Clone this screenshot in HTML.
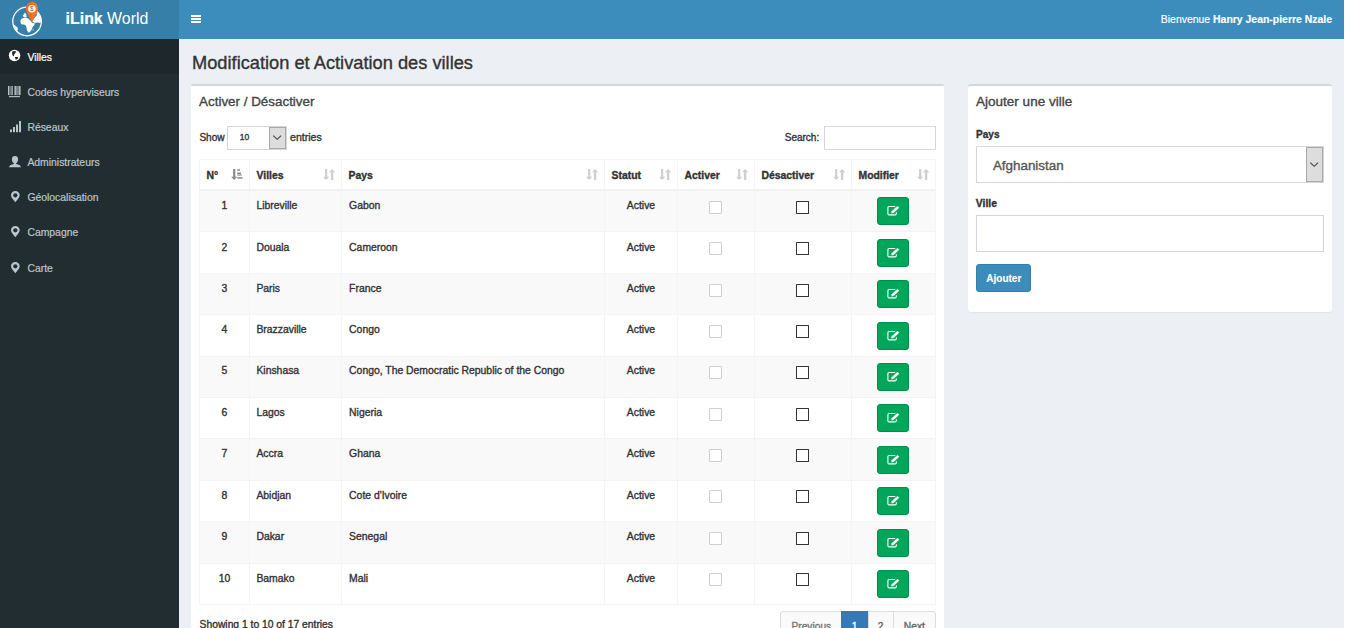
<!DOCTYPE html>
<html><head><meta charset="utf-8"><title>iLink World</title>
<style>
html,body{margin:0;padding:0;}
body{width:1345px;height:628px;overflow:hidden;position:relative;background:#fff;font-family:"Liberation Sans",sans-serif;}
.a{position:absolute;box-sizing:border-box;}
.t{position:absolute;white-space:nowrap;line-height:1;-webkit-text-stroke:0.35px currentColor;}
svg{position:absolute;overflow:visible;}
</style></head><body>
<div class="a" style="left:0px;top:0px;width:1344px;height:628px;background:#ecf0f5"></div>
<div class="a" style="left:0px;top:0px;width:179px;height:39px;background:#367fa9"></div>
<div class="a" style="left:179px;top:0px;width:1165px;height:39px;background:#3c8dbc"></div>
<div class="a" style="left:0px;top:39px;width:179px;height:589px;background:#222d32"></div>
<div class="a" style="left:0px;top:39px;width:179px;height:34.5px;background:#1e282c"></div>
<svg style="left:0;top:0" width="60" height="39" viewBox="0 0 60 39">
<circle cx="27.05" cy="21.45" r="14.3" fill="none" stroke="#fff" stroke-width="1.25"/>
<path d="M20.4,20.7 L21.2,19 L23.6,18 L26.2,17.7 L28.3,18.6 L30.5,20.7 L32.6,22.9 L34.8,23.3 L34.4,25 L32.6,27.2 L31.8,29.3 L30.1,31.9 L28.3,32.6 L27,30.6 L26.6,28.1 L25.8,25.5 L24,24.6 L21.9,24.4 L20.8,23.3 Z" fill="#fff"/>
<path d="M32,21.5 L35.2,16.9 L37,15 L36.1,12.6 L38.5,13.5 L40.6,17 L41,21 L40.4,22.9 L37.5,22.5 L35,23 Z" fill="#fff"/>
<path d="M22.7,16 L24,13.9 L24.9,12.6 L26.2,14.3 L26.6,17.3 L24.5,17.5 Z" fill="#fff"/>
<path d="M13.1,23.8 L15.9,26.3 L17.6,27.6 L17.8,29.8 L16.7,31.5 L14.6,28.1 Z" fill="#fff"/>
<circle cx="33.1" cy="29.8" r="0.6" fill="#fff"/>
<path d="M31.9,1.9 C35.4,1.9 38,4.6 38,8.2 C38,12.6 33.8,17 31.9,22.8 C30,17 25.8,12.6 25.8,8.2 C25.8,4.6 28.4,1.9 31.9,1.9 Z" fill="#f26b21"/>
<path d="M31.9,1.9 C35.4,1.9 38,4.6 38,8.2 C38,12.6 33.8,17 31.9,22.8 Z" fill="#f47f2a" opacity="0.6"/>
<circle cx="31.9" cy="8.8" r="3.8" fill="#fff"/>
<text x="31.9" y="11.2" font-size="6.4" font-family="Liberation Sans" fill="#c8501c" text-anchor="middle">$</text>
</svg>
<div class="t" style="left:65.6px;top:10.75px;font-size:15.9px;color:#fff;-webkit-text-stroke:0;"><b style="-webkit-text-stroke:0.2px #fff">iLink</b> World</div>
<div class="a" style="left:191px;top:15px;width:10px;height:2px;background:#fff"></div>
<div class="a" style="left:191px;top:18px;width:10px;height:2px;background:#fff"></div>
<div class="a" style="left:191px;top:21px;width:10px;height:2px;background:#fff"></div>
<div class="t" style="left:932px;width:400px;text-align:right;top:15.28px;font-size:10.45px;color:#fff;-webkit-text-stroke-width:0.15px;">Bienvenue <b>Hanry Jean-pierre Nzale</b></div>
<div class="t" style="left:27.4px;top:52.80px;font-size:10.4px;color:#fff;-webkit-text-stroke-width:0.2px;">Villes</div>
<div class="t" style="left:27.4px;top:88.10px;font-size:10.4px;color:#b8c7ce;-webkit-text-stroke-width:0.2px;">Codes hyperviseurs</div>
<div class="t" style="left:27.4px;top:123.30px;font-size:10.4px;color:#b8c7ce;-webkit-text-stroke-width:0.2px;">Réseaux</div>
<div class="t" style="left:27.4px;top:157.80px;font-size:10.4px;color:#b8c7ce;-webkit-text-stroke-width:0.2px;">Administrateurs</div>
<div class="t" style="left:27.4px;top:192.80px;font-size:10.4px;color:#b8c7ce;-webkit-text-stroke-width:0.2px;">Géolocalisation</div>
<div class="t" style="left:27.4px;top:228.30px;font-size:10.4px;color:#b8c7ce;-webkit-text-stroke-width:0.2px;">Campagne</div>
<div class="t" style="left:27.4px;top:263.80px;font-size:10.4px;color:#b8c7ce;-webkit-text-stroke-width:0.2px;">Carte</div>
<svg style="left:8px;top:49px" width="14" height="14" viewBox="0 0 14 14"><circle cx="6.55" cy="6.55" r="5.75" fill="#fff"/><path d="M4.6,2.3 L7.9,2.1 L7.6,3.8 L6.4,4.9 L5.9,7.3 L4.4,6.2 L4.0,3.6 Z M6.8,8.1 L10.1,7.9 L9.6,10 L7.8,10.8 Z" fill="#1e282c"/></svg>
<svg style="left:8px;top:85.9px" width="13" height="12" viewBox="0 0 13 12" fill="#b8c7ce"><rect x="0" y="0" width="1.1" height="9.1"/><rect x="1.5" y="0" width="1" height="9.1" opacity="0.8"/><rect x="2.9" y="0" width="0.9" height="9.1" opacity="0.75"/><rect x="4.1" y="0" width="0.9" height="9.1" opacity="0.8"/><rect x="6.4" y="0" width="1.6" height="9.1" opacity="0.9"/><rect x="8.2" y="0" width="0.9" height="9.1" opacity="0.75"/><rect x="9.4" y="0" width="1.2" height="9.1" opacity="0.8"/><rect x="10.9" y="0" width="1.7" height="9.1" opacity="0.9"/><rect x="0.9" y="10.1" width="11" height="1.1"/></svg><svg style="left:9.6px;top:121px" width="11" height="11.2" viewBox="0 0 11 11.2" fill="#b8c7ce"><rect x="0" y="8.5" width="2" height="2.7"/><rect x="3" y="6" width="2" height="5.2"/><rect x="6" y="3.5" width="2" height="7.7"/><rect x="9" y="0" width="2" height="11.2"/></svg>
<svg style="left:8.6px;top:155.9px" width="12" height="11.2" viewBox="0 0 12 11.2" fill="#b8c7ce"><path d="M6,0 C8,0 9.1,1.2 9.1,3.3 C9.1,5.3 8.3,6.6 7.2,7.2 L7.2,7.9 C9.6,8.3 11.6,9.2 12,11.2 L0,11.2 C0.4,9.2 2.4,8.3 4.8,7.9 L4.8,7.2 C3.7,6.6 2.9,5.3 2.9,3.3 C2.9,1.2 4,0 6,0 Z"/></svg>
<svg style="left:10.7px;top:190.8px" width="8.7" height="11.2" viewBox="0 0 8.7 11.2"><path d="M4.35,0 C6.8,0 8.7,1.9 8.7,4.3 C8.7,6.8 6,8.8 4.35,11.2 C2.7,8.8 0,6.8 0,4.3 C0,1.9 1.9,0 4.35,0 Z" fill="#b8c7ce"/><circle cx="4.35" cy="4.3" r="2.1" fill="#222d32"/></svg>
<svg style="left:10.7px;top:226px" width="8.7" height="11.2" viewBox="0 0 8.7 11.2"><path d="M4.35,0 C6.8,0 8.7,1.9 8.7,4.3 C8.7,6.8 6,8.8 4.35,11.2 C2.7,8.8 0,6.8 0,4.3 C0,1.9 1.9,0 4.35,0 Z" fill="#b8c7ce"/><circle cx="4.35" cy="4.3" r="2.1" fill="#222d32"/></svg>
<svg style="left:10.7px;top:261.7px" width="8.7" height="11.2" viewBox="0 0 8.7 11.2"><path d="M4.35,0 C6.8,0 8.7,1.9 8.7,4.3 C8.7,6.8 6,8.8 4.35,11.2 C2.7,8.8 0,6.8 0,4.3 C0,1.9 1.9,0 4.35,0 Z" fill="#b8c7ce"/><circle cx="4.35" cy="4.3" r="2.1" fill="#222d32"/></svg>
<div class="t" style="left:192px;top:54.08px;font-size:18.25px;color:#333;">Modification et Activation des villes</div>
<div class="a" style="left:191px;top:84px;width:753px;height:544px;background:#fff;border-top:2px solid #d2d6de;border-radius:2px 2px 0 0"></div>
<div class="t" style="left:199.1px;top:94.80px;font-size:13.4px;color:#444;">Activer / Désactiver</div>
<div class="t" style="left:199.4px;top:132.95px;font-size:10.1px;color:#333;">Show</div>
<div class="a" style="left:227px;top:126px;width:60px;height:24px;background:#fff;border:1px solid #d2d6de"></div>
<div class="a" style="left:269px;top:127px;width:17px;height:22px;background:#ddd;border:1px solid #a9a9a9"></div>
<svg style="left:273px;top:135px" width="9" height="6" viewBox="0 0 9 6"><path d="M0.3,0.6 L4.2,4.3 L8.1,0.6" fill="none" stroke="#444" stroke-width="1.15"/></svg>
<div class="t" style="left:239.8px;top:133.45px;font-size:8.5px;color:#333;">10</div>
<div class="t" style="left:290px;top:131.70px;font-size:10.6px;color:#333;">entries</div>
<div class="t" style="left:419.20000000000005px;width:400px;text-align:right;top:132.50px;font-size:10px;color:#333;">Search:</div>
<div class="a" style="left:824px;top:126px;width:112px;height:24px;background:#fff;border:1px solid #d2d6de"></div>
<div class="a" style="left:199px;top:159px;width:737px;height:446px;background:#fff"></div>
<div class="a" style="left:199px;top:191px;width:737px;height:40px;background:#f9f9f9"></div>
<div class="a" style="left:199px;top:274px;width:737px;height:40px;background:#f9f9f9"></div>
<div class="a" style="left:199px;top:357px;width:737px;height:40px;background:#f9f9f9"></div>
<div class="a" style="left:199px;top:439px;width:737px;height:41px;background:#f9f9f9"></div>
<div class="a" style="left:199px;top:522px;width:737px;height:41px;background:#f9f9f9"></div>
<div class="a" style="left:199px;top:159px;width:1px;height:446px;background:#f4f4f4"></div>
<div class="a" style="left:249px;top:159px;width:1px;height:446px;background:#f4f4f4"></div>
<div class="a" style="left:341px;top:159px;width:1px;height:446px;background:#f4f4f4"></div>
<div class="a" style="left:604px;top:159px;width:1px;height:446px;background:#f4f4f4"></div>
<div class="a" style="left:677px;top:159px;width:1px;height:446px;background:#f4f4f4"></div>
<div class="a" style="left:754px;top:159px;width:1px;height:446px;background:#f4f4f4"></div>
<div class="a" style="left:851px;top:159px;width:1px;height:446px;background:#f4f4f4"></div>
<div class="a" style="left:935px;top:159px;width:1px;height:446px;background:#f4f4f4"></div>
<div class="a" style="left:199px;top:159px;width:737px;height:1px;background:#f4f4f4"></div>
<div class="a" style="left:199px;top:189px;width:737px;height:2px;background:#f2f2f2"></div>
<div class="a" style="left:199px;top:231px;width:737px;height:1px;background:#f4f4f4"></div>
<div class="a" style="left:199px;top:273px;width:737px;height:1px;background:#f4f4f4"></div>
<div class="a" style="left:199px;top:314px;width:737px;height:1px;background:#f4f4f4"></div>
<div class="a" style="left:199px;top:356px;width:737px;height:1px;background:#f4f4f4"></div>
<div class="a" style="left:199px;top:397px;width:737px;height:1px;background:#f4f4f4"></div>
<div class="a" style="left:199px;top:438px;width:737px;height:1px;background:#f4f4f4"></div>
<div class="a" style="left:199px;top:480px;width:737px;height:1px;background:#f4f4f4"></div>
<div class="a" style="left:199px;top:521px;width:737px;height:1px;background:#f4f4f4"></div>
<div class="a" style="left:199px;top:563px;width:737px;height:1px;background:#f4f4f4"></div>
<div class="a" style="left:199px;top:604px;width:737px;height:1px;background:#f4f4f4"></div>
<div class="t" style="left:206.5px;top:171.40px;font-size:10.4px;font-weight:700;color:#333;">N°</div>
<svg style="left:231px;top:168.8px" width="13" height="12" viewBox="0 0 13 12" fill="#8a8a8a"><rect x="2.1" y="0" width="2.2" height="8.2"/><path d="M0.2,7.8 H6.2 L3.2,11.1 Z"/><rect x="6.2" y="0.3" width="2.9" height="1.5"/><rect x="6.2" y="3.5" width="3.8" height="1.5"/><rect x="6.2" y="5.4" width="4.5" height="1.2"/><rect x="6.2" y="8.2" width="5.4" height="1.5"/></svg>
<div class="t" style="left:256.5px;top:171.40px;font-size:10.4px;font-weight:700;color:#333;">Villes</div>
<svg style="left:323px;top:168.8px" width="13" height="12" viewBox="0 0 13 12" fill="#d0d0d0"><rect x="2.05" y="0" width="2.2" height="8.2"/><path d="M0,7.8 H6.3 L3.15,11.1 Z"/><rect x="7.9" y="3" width="2.4" height="8.1"/><path d="M5.9,3.3 H12.3 L9.1,0.1 Z"/></svg>
<div class="t" style="left:348.5px;top:171.40px;font-size:10.4px;font-weight:700;color:#333;">Pays</div>
<svg style="left:586px;top:168.8px" width="13" height="12" viewBox="0 0 13 12" fill="#d0d0d0"><rect x="2.05" y="0" width="2.2" height="8.2"/><path d="M0,7.8 H6.3 L3.15,11.1 Z"/><rect x="7.9" y="3" width="2.4" height="8.1"/><path d="M5.9,3.3 H12.3 L9.1,0.1 Z"/></svg>
<div class="t" style="left:611.5px;top:171.40px;font-size:10.4px;font-weight:700;color:#333;">Statut</div>
<svg style="left:659px;top:168.8px" width="13" height="12" viewBox="0 0 13 12" fill="#d0d0d0"><rect x="2.05" y="0" width="2.2" height="8.2"/><path d="M0,7.8 H6.3 L3.15,11.1 Z"/><rect x="7.9" y="3" width="2.4" height="8.1"/><path d="M5.9,3.3 H12.3 L9.1,0.1 Z"/></svg>
<div class="t" style="left:684.5px;top:171.40px;font-size:10.4px;font-weight:700;color:#333;">Activer</div>
<svg style="left:736px;top:168.8px" width="13" height="12" viewBox="0 0 13 12" fill="#d0d0d0"><rect x="2.05" y="0" width="2.2" height="8.2"/><path d="M0,7.8 H6.3 L3.15,11.1 Z"/><rect x="7.9" y="3" width="2.4" height="8.1"/><path d="M5.9,3.3 H12.3 L9.1,0.1 Z"/></svg>
<div class="t" style="left:761.5px;top:171.40px;font-size:10.4px;font-weight:700;color:#333;">Désactiver</div>
<svg style="left:833px;top:168.8px" width="13" height="12" viewBox="0 0 13 12" fill="#d0d0d0"><rect x="2.05" y="0" width="2.2" height="8.2"/><path d="M0,7.8 H6.3 L3.15,11.1 Z"/><rect x="7.9" y="3" width="2.4" height="8.1"/><path d="M5.9,3.3 H12.3 L9.1,0.1 Z"/></svg>
<div class="t" style="left:858.5px;top:171.40px;font-size:10.4px;font-weight:700;color:#333;">Modifier</div>
<svg style="left:917px;top:168.8px" width="13" height="12" viewBox="0 0 13 12" fill="#d0d0d0"><rect x="2.05" y="0" width="2.2" height="8.2"/><path d="M0,7.8 H6.3 L3.15,11.1 Z"/><rect x="7.9" y="3" width="2.4" height="8.1"/><path d="M5.9,3.3 H12.3 L9.1,0.1 Z"/></svg>
<div class="t" style="left:124.5px;width:200px;text-align:center;top:200.60px;font-size:10.4px;color:#333;">1</div>
<div class="t" style="left:256.4px;top:200.60px;font-size:10.4px;color:#333;">Libreville</div>
<div class="t" style="left:349.1px;top:200.60px;font-size:10.4px;color:#333;">Gabon</div>
<div class="t" style="left:541px;width:200px;text-align:center;top:200.60px;font-size:10.4px;color:#333;">Active</div>
<div class="a" style="left:709px;top:201px;width:13px;height:13px;background:#fff;border:1px solid #cfcfcf;border-radius:1px"></div>
<div class="a" style="left:796px;top:201px;width:13px;height:13px;background:#fff;border:1.4px solid #333;border-radius:0.5px"></div>
<div class="a" style="left:877px;top:197px;width:32px;height:28px;background:#00a65a;border:1px solid #008d4c;border-radius:3px"></div>
<svg style="left:877px;top:197px" width="32" height="28" viewBox="0 0 32 28"><path d="M18.2,9.5 H12 Q10.9,9.5 10.9,10.6 V16.8 Q10.9,17.9 12,17.9 H18.2 Q19.3,17.9 19.3,16.8 V15.2" fill="none" stroke="#fff" stroke-width="1.1"/><path d="M20.4,8.9 L22.3,10.8 L16.5,16.1 L14.3,16.5 L14.6,14.3 Z" fill="#fff"/></svg>
<div class="t" style="left:124.5px;width:200px;text-align:center;top:242.55px;font-size:10.4px;color:#333;">2</div>
<div class="t" style="left:256.4px;top:242.55px;font-size:10.4px;color:#333;">Douala</div>
<div class="t" style="left:349.1px;top:242.55px;font-size:10.4px;color:#333;">Cameroon</div>
<div class="t" style="left:541px;width:200px;text-align:center;top:242.55px;font-size:10.4px;color:#333;">Active</div>
<div class="a" style="left:709px;top:242px;width:13px;height:13px;background:#fff;border:1px solid #cfcfcf;border-radius:1px"></div>
<div class="a" style="left:796px;top:242px;width:13px;height:13px;background:#fff;border:1.4px solid #333;border-radius:0.5px"></div>
<div class="a" style="left:877px;top:239px;width:32px;height:28px;background:#00a65a;border:1px solid #008d4c;border-radius:3px"></div>
<svg style="left:877px;top:239px" width="32" height="28" viewBox="0 0 32 28"><path d="M18.2,9.5 H12 Q10.9,9.5 10.9,10.6 V16.8 Q10.9,17.9 12,17.9 H18.2 Q19.3,17.9 19.3,16.8 V15.2" fill="none" stroke="#fff" stroke-width="1.1"/><path d="M20.4,8.9 L22.3,10.8 L16.5,16.1 L14.3,16.5 L14.6,14.3 Z" fill="#fff"/></svg>
<div class="t" style="left:124.5px;width:200px;text-align:center;top:283.50px;font-size:10.4px;color:#333;">3</div>
<div class="t" style="left:256.4px;top:283.50px;font-size:10.4px;color:#333;">Paris</div>
<div class="t" style="left:349.1px;top:283.50px;font-size:10.4px;color:#333;">France</div>
<div class="t" style="left:541px;width:200px;text-align:center;top:283.50px;font-size:10.4px;color:#333;">Active</div>
<div class="a" style="left:709px;top:284px;width:13px;height:13px;background:#fff;border:1px solid #cfcfcf;border-radius:1px"></div>
<div class="a" style="left:796px;top:284px;width:13px;height:13px;background:#fff;border:1.4px solid #333;border-radius:0.5px"></div>
<div class="a" style="left:877px;top:280px;width:32px;height:28px;background:#00a65a;border:1px solid #008d4c;border-radius:3px"></div>
<svg style="left:877px;top:280px" width="32" height="28" viewBox="0 0 32 28"><path d="M18.2,9.5 H12 Q10.9,9.5 10.9,10.6 V16.8 Q10.9,17.9 12,17.9 H18.2 Q19.3,17.9 19.3,16.8 V15.2" fill="none" stroke="#fff" stroke-width="1.1"/><path d="M20.4,8.9 L22.3,10.8 L16.5,16.1 L14.3,16.5 L14.6,14.3 Z" fill="#fff"/></svg>
<div class="t" style="left:124.5px;width:200px;text-align:center;top:324.95px;font-size:10.4px;color:#333;">4</div>
<div class="t" style="left:256.4px;top:324.95px;font-size:10.4px;color:#333;">Brazzaville</div>
<div class="t" style="left:349.1px;top:324.95px;font-size:10.4px;color:#333;">Congo</div>
<div class="t" style="left:541px;width:200px;text-align:center;top:324.95px;font-size:10.4px;color:#333;">Active</div>
<div class="a" style="left:709px;top:325px;width:13px;height:13px;background:#fff;border:1px solid #cfcfcf;border-radius:1px"></div>
<div class="a" style="left:796px;top:325px;width:13px;height:13px;background:#fff;border:1.4px solid #333;border-radius:0.5px"></div>
<div class="a" style="left:877px;top:322px;width:32px;height:28px;background:#00a65a;border:1px solid #008d4c;border-radius:3px"></div>
<svg style="left:877px;top:322px" width="32" height="28" viewBox="0 0 32 28"><path d="M18.2,9.5 H12 Q10.9,9.5 10.9,10.6 V16.8 Q10.9,17.9 12,17.9 H18.2 Q19.3,17.9 19.3,16.8 V15.2" fill="none" stroke="#fff" stroke-width="1.1"/><path d="M20.4,8.9 L22.3,10.8 L16.5,16.1 L14.3,16.5 L14.6,14.3 Z" fill="#fff"/></svg>
<div class="t" style="left:124.5px;width:200px;text-align:center;top:366.40px;font-size:10.4px;color:#333;">5</div>
<div class="t" style="left:256.4px;top:366.40px;font-size:10.4px;color:#333;">Kinshasa</div>
<div class="t" style="left:349.1px;top:366.40px;font-size:10.4px;color:#333;">Congo, The Democratic Republic of the Congo</div>
<div class="t" style="left:541px;width:200px;text-align:center;top:366.40px;font-size:10.4px;color:#333;">Active</div>
<div class="a" style="left:709px;top:366px;width:13px;height:13px;background:#fff;border:1px solid #cfcfcf;border-radius:1px"></div>
<div class="a" style="left:796px;top:366px;width:13px;height:13px;background:#fff;border:1.4px solid #333;border-radius:0.5px"></div>
<div class="a" style="left:877px;top:363px;width:32px;height:28px;background:#00a65a;border:1px solid #008d4c;border-radius:3px"></div>
<svg style="left:877px;top:363px" width="32" height="28" viewBox="0 0 32 28"><path d="M18.2,9.5 H12 Q10.9,9.5 10.9,10.6 V16.8 Q10.9,17.9 12,17.9 H18.2 Q19.3,17.9 19.3,16.8 V15.2" fill="none" stroke="#fff" stroke-width="1.1"/><path d="M20.4,8.9 L22.3,10.8 L16.5,16.1 L14.3,16.5 L14.6,14.3 Z" fill="#fff"/></svg>
<div class="t" style="left:124.5px;width:200px;text-align:center;top:407.85px;font-size:10.4px;color:#333;">6</div>
<div class="t" style="left:256.4px;top:407.85px;font-size:10.4px;color:#333;">Lagos</div>
<div class="t" style="left:349.1px;top:407.85px;font-size:10.4px;color:#333;">Nigeria</div>
<div class="t" style="left:541px;width:200px;text-align:center;top:407.85px;font-size:10.4px;color:#333;">Active</div>
<div class="a" style="left:709px;top:408px;width:13px;height:13px;background:#fff;border:1px solid #cfcfcf;border-radius:1px"></div>
<div class="a" style="left:796px;top:408px;width:13px;height:13px;background:#fff;border:1.4px solid #333;border-radius:0.5px"></div>
<div class="a" style="left:877px;top:404px;width:32px;height:28px;background:#00a65a;border:1px solid #008d4c;border-radius:3px"></div>
<svg style="left:877px;top:404px" width="32" height="28" viewBox="0 0 32 28"><path d="M18.2,9.5 H12 Q10.9,9.5 10.9,10.6 V16.8 Q10.9,17.9 12,17.9 H18.2 Q19.3,17.9 19.3,16.8 V15.2" fill="none" stroke="#fff" stroke-width="1.1"/><path d="M20.4,8.9 L22.3,10.8 L16.5,16.1 L14.3,16.5 L14.6,14.3 Z" fill="#fff"/></svg>
<div class="t" style="left:124.5px;width:200px;text-align:center;top:449.30px;font-size:10.4px;color:#333;">7</div>
<div class="t" style="left:256.4px;top:449.30px;font-size:10.4px;color:#333;">Accra</div>
<div class="t" style="left:349.1px;top:449.30px;font-size:10.4px;color:#333;">Ghana</div>
<div class="t" style="left:541px;width:200px;text-align:center;top:449.30px;font-size:10.4px;color:#333;">Active</div>
<div class="a" style="left:709px;top:449px;width:13px;height:13px;background:#fff;border:1px solid #cfcfcf;border-radius:1px"></div>
<div class="a" style="left:796px;top:449px;width:13px;height:13px;background:#fff;border:1.4px solid #333;border-radius:0.5px"></div>
<div class="a" style="left:877px;top:446px;width:32px;height:28px;background:#00a65a;border:1px solid #008d4c;border-radius:3px"></div>
<svg style="left:877px;top:446px" width="32" height="28" viewBox="0 0 32 28"><path d="M18.2,9.5 H12 Q10.9,9.5 10.9,10.6 V16.8 Q10.9,17.9 12,17.9 H18.2 Q19.3,17.9 19.3,16.8 V15.2" fill="none" stroke="#fff" stroke-width="1.1"/><path d="M20.4,8.9 L22.3,10.8 L16.5,16.1 L14.3,16.5 L14.6,14.3 Z" fill="#fff"/></svg>
<div class="t" style="left:124.5px;width:200px;text-align:center;top:490.75px;font-size:10.4px;color:#333;">8</div>
<div class="t" style="left:256.4px;top:490.75px;font-size:10.4px;color:#333;">Abidjan</div>
<div class="t" style="left:349.1px;top:490.75px;font-size:10.4px;color:#333;">Cote d'Ivoire</div>
<div class="t" style="left:541px;width:200px;text-align:center;top:490.75px;font-size:10.4px;color:#333;">Active</div>
<div class="a" style="left:709px;top:490px;width:13px;height:13px;background:#fff;border:1px solid #cfcfcf;border-radius:1px"></div>
<div class="a" style="left:796px;top:490px;width:13px;height:13px;background:#fff;border:1.4px solid #333;border-radius:0.5px"></div>
<div class="a" style="left:877px;top:487px;width:32px;height:28px;background:#00a65a;border:1px solid #008d4c;border-radius:3px"></div>
<svg style="left:877px;top:487px" width="32" height="28" viewBox="0 0 32 28"><path d="M18.2,9.5 H12 Q10.9,9.5 10.9,10.6 V16.8 Q10.9,17.9 12,17.9 H18.2 Q19.3,17.9 19.3,16.8 V15.2" fill="none" stroke="#fff" stroke-width="1.1"/><path d="M20.4,8.9 L22.3,10.8 L16.5,16.1 L14.3,16.5 L14.6,14.3 Z" fill="#fff"/></svg>
<div class="t" style="left:124.5px;width:200px;text-align:center;top:532.20px;font-size:10.4px;color:#333;">9</div>
<div class="t" style="left:256.4px;top:532.20px;font-size:10.4px;color:#333;">Dakar</div>
<div class="t" style="left:349.1px;top:532.20px;font-size:10.4px;color:#333;">Senegal</div>
<div class="t" style="left:541px;width:200px;text-align:center;top:532.20px;font-size:10.4px;color:#333;">Active</div>
<div class="a" style="left:709px;top:532px;width:13px;height:13px;background:#fff;border:1px solid #cfcfcf;border-radius:1px"></div>
<div class="a" style="left:796px;top:532px;width:13px;height:13px;background:#fff;border:1.4px solid #333;border-radius:0.5px"></div>
<div class="a" style="left:877px;top:529px;width:32px;height:28px;background:#00a65a;border:1px solid #008d4c;border-radius:3px"></div>
<svg style="left:877px;top:529px" width="32" height="28" viewBox="0 0 32 28"><path d="M18.2,9.5 H12 Q10.9,9.5 10.9,10.6 V16.8 Q10.9,17.9 12,17.9 H18.2 Q19.3,17.9 19.3,16.8 V15.2" fill="none" stroke="#fff" stroke-width="1.1"/><path d="M20.4,8.9 L22.3,10.8 L16.5,16.1 L14.3,16.5 L14.6,14.3 Z" fill="#fff"/></svg>
<div class="t" style="left:124.5px;width:200px;text-align:center;top:573.65px;font-size:10.4px;color:#333;">10</div>
<div class="t" style="left:256.4px;top:573.65px;font-size:10.4px;color:#333;">Bamako</div>
<div class="t" style="left:349.1px;top:573.65px;font-size:10.4px;color:#333;">Mali</div>
<div class="t" style="left:541px;width:200px;text-align:center;top:573.65px;font-size:10.4px;color:#333;">Active</div>
<div class="a" style="left:709px;top:573px;width:13px;height:13px;background:#fff;border:1px solid #cfcfcf;border-radius:1px"></div>
<div class="a" style="left:796px;top:573px;width:13px;height:13px;background:#fff;border:1.4px solid #333;border-radius:0.5px"></div>
<div class="a" style="left:877px;top:570px;width:32px;height:28px;background:#00a65a;border:1px solid #008d4c;border-radius:3px"></div>
<svg style="left:877px;top:570px" width="32" height="28" viewBox="0 0 32 28"><path d="M18.2,9.5 H12 Q10.9,9.5 10.9,10.6 V16.8 Q10.9,17.9 12,17.9 H18.2 Q19.3,17.9 19.3,16.8 V15.2" fill="none" stroke="#fff" stroke-width="1.1"/><path d="M20.4,8.9 L22.3,10.8 L16.5,16.1 L14.3,16.5 L14.6,14.3 Z" fill="#fff"/></svg>
<div class="t" style="left:199.6px;top:620.35px;font-size:10.3px;color:#333;">Showing 1 to 10 of 17 entries</div>
<div class="a" style="left:780px;top:611px;width:156px;height:29px;background:#fafafa;border:1px solid #ddd;border-radius:3px"></div>
<div class="a" style="left:841px;top:611px;width:27px;height:29px;background:#337ab7;border:1px solid #337ab7"></div>
<div class="a" style="left:893px;top:611px;width:1px;height:29px;background:#ddd"></div>
<div class="a" style="left:868px;top:611px;width:1px;height:29px;background:#ddd"></div>
<div class="t" style="left:791.5px;top:621.90px;font-size:10.2px;color:#777;">Previous</div>
<div class="t" style="left:754.5px;width:200px;text-align:center;top:621.85px;font-size:10.3px;color:#fff;">1</div>
<div class="t" style="left:780.5px;width:200px;text-align:center;top:621.85px;font-size:10.3px;color:#666;">2</div>
<div class="t" style="left:814.4px;width:200px;text-align:center;top:621.85px;font-size:10.3px;color:#666;">Next</div>
<div class="a" style="left:968px;top:84px;width:364px;height:228px;background:#fff;border-top:2px solid #d2d6de;border-radius:3px;box-shadow:0 1px 1px rgba(0,0,0,0.04)"></div>
<div class="t" style="left:976.1px;top:95.25px;font-size:13.5px;color:#444;">Ajouter une ville</div>
<div class="t" style="left:976.1px;top:130.30px;font-size:10px;font-weight:700;color:#333;">Pays</div>
<div class="a" style="left:976px;top:146px;width:348px;height:37px;background:#fff;border:1px solid #d2d6de"></div>
<div class="a" style="left:1306px;top:147px;width:17px;height:35px;background:#ddd;border:1px solid #a9a9a9"></div>
<svg style="left:1310px;top:162px" width="9" height="6" viewBox="0 0 9 6"><path d="M0.3,0.6 L4.2,4.3 L8.1,0.6" fill="none" stroke="#444" stroke-width="1.15"/></svg>
<div class="t" style="left:992.9px;top:159.20px;font-size:13.4px;color:#555;">Afghanistan</div>
<div class="t" style="left:975.8px;top:199.10px;font-size:10.4px;font-weight:700;color:#333;">Ville</div>
<div class="a" style="left:976px;top:215px;width:348px;height:37px;background:#fff;border:1px solid #d2d6de"></div>
<div class="a" style="left:976px;top:264px;width:55px;height:28px;background:#3c8dbc;border:1px solid #367fa9;border-radius:3px"></div>
<div class="t" style="left:986.3px;top:274.00px;font-size:10px;font-weight:700;color:#fff;-webkit-text-stroke-width:0.1px;">Ajouter</div>
</body></html>
